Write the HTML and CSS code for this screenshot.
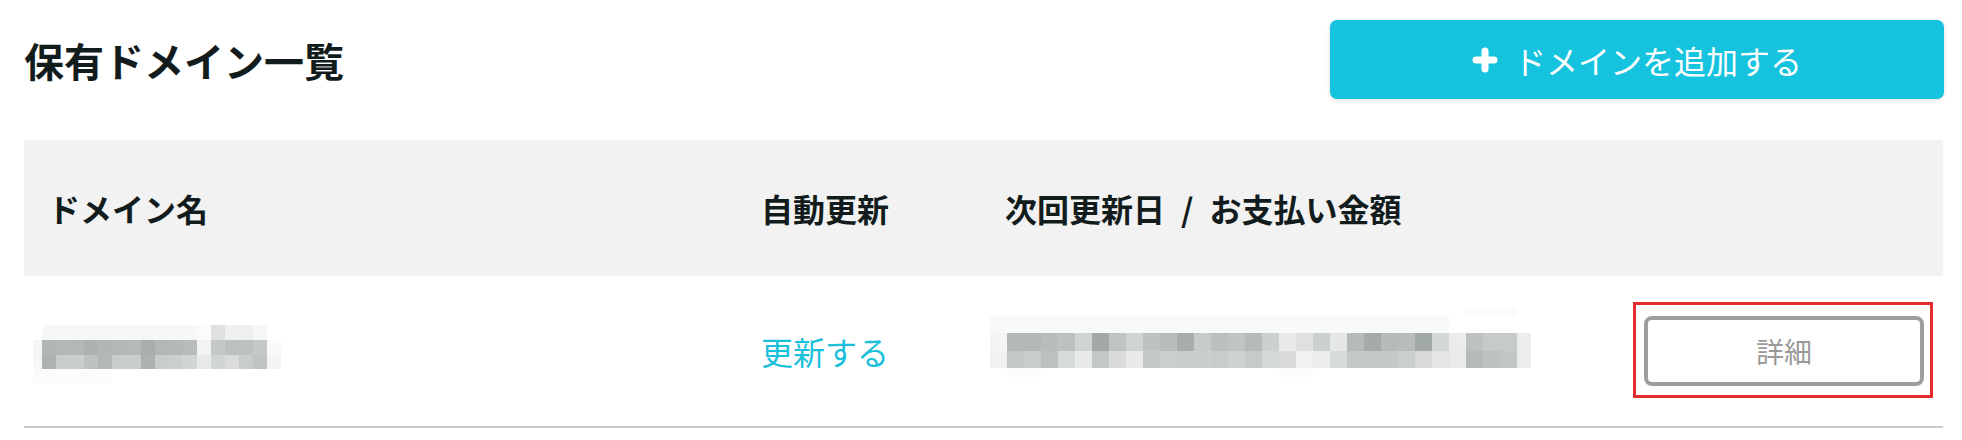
FILE: index.html
```html
<!DOCTYPE html>
<html lang="ja">
<head>
    <meta charset="UTF-8">
    <meta name="viewport" content="width=device-width, initial-scale=1.0">
    <title>保有ドメイン一覧</title>
    <link rel="stylesheet" href="styles.css">
</head>
<body>
    <div class="page">
        <!-- Nagłówek strony -->
        <div class="page-head">
            <h1 class="page-title">保有ドメイン一覧</h1>
            <button class="add-btn" type="button">
                <svg class="plus-icon" width="26" height="26" viewBox="0 0 26 26">
                    <path d="M13 4 V22 M4 13 H22" stroke="#fff" stroke-width="7" stroke-linecap="round" fill="none"/>
                </svg>
                <span>ドメインを追加する</span>
            </button>
        </div>

        <!-- Lista domen -->
        <table class="domain-table">
            <colgroup>
                <col class="col-name">
                <col class="col-auto">
                <col class="col-next">
                <col class="col-action">
            </colgroup>
            <thead>
                <tr>
                    <th>ドメイン名</th>
                    <th>自動更新</th>
                    <th>次回更新日<span class="sep">/</span>お支払い金額</th>
                    <th></th>
                </tr>
            </thead>
            <tbody>
                <tr>
                    <td>
                        <div class="mosaic domain-mosaic" aria-label="ドメイン名（非表示）">
                            <div class="m-row d-r1"></div>
                            <div class="m-row d-r2"></div>
                            <div class="m-row d-r3"></div>
                            <div class="m-row d-r4"></div>
                        </div>
                    </td>
                    <td><a class="renew-link" href="#">更新する</a></td>
                    <td>
                        <div class="mosaic date-mosaic" aria-label="次回更新日（非表示）">
                            <div class="m-row n-r0"></div>
                            <div class="m-row n-r1"></div>
                            <div class="m-row n-r2"></div>
                            <div class="m-row n-r3"></div>
                            <div class="m-row n-r4"></div>
                        </div>
                    </td>
                    <td class="action-cell">
                        <button class="detail-btn" type="button">詳細</button>
                    </td>
                </tr>
            </tbody>
        </table>
    </div>
</body>
</html>
```

FILE: styles.css
```css
/* Cała strona */
body {
    margin: 0;
    background-color: #fff;
    color: #121c1c;
    font-family: "Noto Sans CJK JP", "Liberation Sans", sans-serif;
}

.page {
    padding: 20px 18px 0 24px;
}

/* Tytuł i przycisk dodawania */
.page-head {
    display: flex;
    justify-content: space-between;
    align-items: center;
    margin-bottom: 41px;
}

.page-title {
    margin: 0;
    font-size: 40px;
    font-weight: 700;
    line-height: 1;
}

.add-btn {
    width: 614px;
    height: 79px;
    display: flex;
    align-items: center;
    justify-content: center;
    gap: 16px;
    padding: 0;
    border: 0;
    border-radius: 7px;
    background-color: #16c3de;
    color: #fff;
    font-family: inherit;
    font-size: 32px;
    line-height: 1;
    box-shadow: 0 1px 4px rgba(0, 0, 0, 0.14);
}

.plus-icon {
    display: block;
}

/* Tabela */
.domain-table {
    width: 1919px;
    border-collapse: collapse;
    table-layout: fixed;
}

.col-name { width: 713px; }
.col-auto { width: 244px; }
.col-next { width: 620px; }
.col-action { width: 342px; }

.domain-table th {
    height: 136px;
    padding: 0 0 0 24px;
    background-color: #f2f2f2;
    text-align: left;
    font-size: 32px;
    font-weight: 700;
    line-height: 1;
}

.sep {
    margin: 0 16px;
}

.domain-table td {
    height: 150px;
    padding: 0 0 0 24px;
    border-bottom: 2px solid #cccccc;
    font-size: 32px;
    line-height: 1;
    vertical-align: middle;
}

.renew-link {
    color: #1bc0da;
    text-decoration: none;
}

.action-cell {
    text-align: right;
    padding-right: 19px !important;
}

.detail-btn {
    position: relative;
    width: 280px;
    height: 70px;
    border: 4px solid #9e9e9e;
    border-radius: 8px;
    background-color: #fff;
    color: #999;
    font-family: inherit;
    font-size: 28px;
    line-height: 1;
    vertical-align: middle;
}

/* Czerwona ramka zaznaczenia */
.detail-btn::after {
    content: "";
    position: absolute;
    top: -18px;
    left: -15px;
    right: -13px;
    bottom: -16px;
    border: 3px solid #e62b2e;
}

/* Zamazane dane (mozaika) */
.mosaic .m-row {
    width: 100%;
}

.domain-mosaic {
    width: 248px;
    margin-left: -15px;
    padding-top: 6px;
}

.d-r1 {
    height: 15px;
    background: linear-gradient(to right, transparent 0 9px, #f6f7f7 9px 164px, #fbfbfb 164px 178px, #e0e2e2 178px 192px, #eff1f1 192px 220px, #f5f6f6 220px 234px, transparent 234px);
}

.d-r2 {
    height: 15px;
    background: linear-gradient(to right, #f5f5f5 0 9px, #b1b6b6 9px 23px, #b3b8b8 23px 37px, #b2b7b7 37px 51px, #acb2b2 51px 65px, #b2b6b6 65px 79px, #b4b8b8 79px 94px, #b5b9b9 94px 108px, #a8aeae 108px 122px, #b3b7b7 122px 136px, #b4b8b8 136px 150px, #b8bcbc 150px 164px, #f2f3f3 164px 178px, #c4c8c8 178px 192px, #bcc0c0 192px 206px, #bdc1c1 206px 220px, #c4c8c8 220px 234px, #fafafa 234px 248px);
}

.d-r3 {
    height: 14px;
    background: linear-gradient(to right, #f7f7f7 0 9px, #adb3b3 9px 23px, #c8cccc 23px 37px, #c9cdcd 37px 51px, #bdc2c2 51px 65px, #b2b7b7 65px 79px, #c8cccc 79px 94px, #c9cdcd 94px 108px, #acb2b2 108px 122px, #c8cccc 122px 136px, #cbcfcf 136px 150px, #d2d5d5 150px 164px, #e8eaea 164px 178px, #d2d5d5 178px 192px, #dadcdc 192px 206px, #c8cccc 206px 220px, #c0c4c4 220px 234px, #f4f4f4 234px 248px);
}

.d-r4 {
    height: 14px;
    background: linear-gradient(to right, #fafafa 0 23px, #fcfcfc 23px 79px, transparent 79px);
}

.date-mosaic {
    width: 541px;
    margin-left: -15px;
    padding-bottom: 17px;
}

.n-r0 {
    height: 8px;
    background: linear-gradient(to right, transparent 0 476px, #fbfbfb 476px 527px, transparent 527px);
}

.n-r1 {
    height: 17px;
    background: linear-gradient(to right, #f8f9f9 0 459px, transparent 459px);
}

.n-r2 {
    height: 18px;
    background: linear-gradient(to right, #f4f4f4 0 17px, #b3b8b8 17px 34px, #b3b8b8 34px 51px, #b8bdbd 51px 68px, #bdc1c1 68px 85px, #d0d3d3 85px 102px, #a3a8a8 102px 119px, #bfc3c3 119px 136px, #d0d3d3 136px 153px, #bec2c2 153px 170px, #b8bdbd 170px 187px, #a7acac 187px 204px, #c8cbcb 204px 221px, #bbbfbf 221px 238px, #c0c4c4 238px 255px, #b5baba 255px 272px, #ccd0d0 272px 289px, #e8eaea 289px 306px, #dfe1e1 306px 323px, #ccd0d0 323px 340px, #e5e7e7 340px 357px, #b5baba 357px 374px, #a5abab 374px 391px, #b5baba 391px 408px, #b8bcbc 408px 425px, #a2a9a9 425px 442px, #d4d7d7 442px 459px, #ececec 459px 476px, #bcc1c1 476px 493px, #c6caca 493px 510px, #c6caca 510px 527px, #ededed 527px 541px);
}

.n-r3 {
    height: 17px;
    background: linear-gradient(to right, #f0f1f1 0 17px, #c3c7c7 17px 34px, #cacdcd 34px 51px, #bcc0c0 51px 68px, #d8dbdb 68px 85px, #e8eaea 85px 102px, #c3c7c7 102px 119px, #dadcdc 119px 136px, #e8eaea 136px 153px, #c5c9c9 153px 170px, #cdd0d0 170px 187px, #c9cdcd 187px 204px, #cacece 204px 221px, #c8cccc 221px 238px, #cfd2d2 238px 255px, #c6caca 255px 272px, #d5d8d8 272px 289px, #d9dbdb 289px 306px, #f0f1f1 306px 323px, #ecedee 323px 340px, #d8dbdb 340px 357px, #c5c9c9 357px 374px, #c4c8c8 374px 391px, #c5c9c9 391px 408px, #cccfcf 408px 425px, #d8dada 425px 442px, #e4e6e6 442px 459px, #e9ebeb 459px 476px, #b5baba 476px 493px, #bcc1c1 493px 510px, #c2c6c6 510px 527px, #ececec 527px 541px);
}

.n-r4 {
    height: 9px;
    background: linear-gradient(to right, transparent 0 17px, #fcfcfc 17px 51px, transparent 51px 289px, #fcfcfc 289px 323px, transparent 323px);
}
```
